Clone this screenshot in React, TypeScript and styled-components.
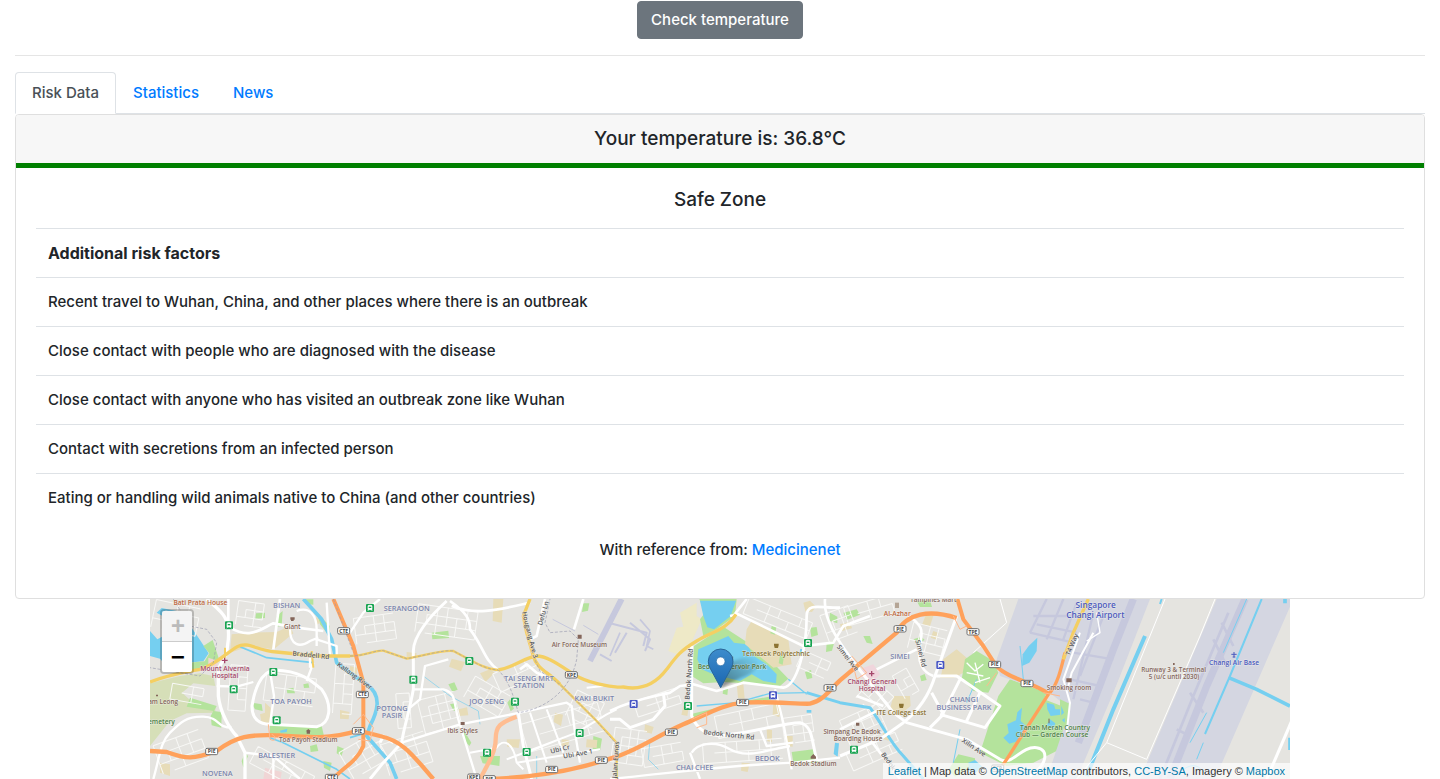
import React from 'react';
import styled, { createGlobalStyle } from 'styled-components';

const GlobalStyle = createGlobalStyle`
  *, *::before, *::after { box-sizing: border-box; }
  body {
    margin: 0;
    background: #fff;
    color: #212529;
    font-family: Inter, 'Liberation Sans', sans-serif;
    font-size: 15px;
    font-weight: 450;
    line-height: 24px;
  }
`;

const Page = styled.main`
  padding: 1px 15px 0;
`;

const Toolbar = styled.div`
  display: flex;
  justify-content: center;
`;

const PrimaryButton = styled.button`
  padding: 6px 13px;
  border: 1px solid #6c757d;
  border-radius: 4px;
  background: #6c757d;
  color: #fff;
  font: inherit;
  font-weight: 500;
  cursor: pointer;
`;

const Divider = styled.hr`
  margin: 16px 0;
  border: 0;
  border-top: 1px solid rgba(0, 0, 0, 0.1);
`;

const Tabs = styled.nav`
  display: flex;
  border-bottom: 1px solid #dee2e6;
`;

const Tab = styled.a<{ $active?: boolean }>`
  margin-bottom: -1px;
  padding: 8px 16px;
  border: 1px solid;
  border-color: ${(p) => (p.$active ? '#dee2e6 #dee2e6 #fff' : 'transparent')};
  border-radius: 4px 4px 0 0;
  background: ${(p) => (p.$active ? '#fff' : 'transparent')};
  color: ${(p) => (p.$active ? '#495057' : '#007bff')};
  font-weight: 500;
  text-decoration: none;
`;

const Card = styled.section`
  border: 1px solid #dfdfdf;
  border-radius: 4px;
  background: #fff;
`;

const CardHeader = styled.header`
  padding: 12px 20px;
  border-bottom: 5px solid green;
  border-radius: 3px 3px 0 0;
  background: #f7f7f7;
`;

const CardBody = styled.div`
  padding: 20px;
`;

const Heading = styled.h5<{ $spaced?: boolean }>`
  margin: 0 0 ${(p) => (p.$spaced ? 16 : 0)}px;
  font-size: 19px;
  font-weight: 500;
  line-height: 24px;
  text-align: center;
`;

const FactorTable = styled.table`
  width: 100%;
  margin-bottom: 16px;
  border-collapse: separate;
  border-spacing: 0;
  text-align: left;

  th, td {
    padding: 12px;
    border-top: 1px solid #dee2e6;
  }
  th { font-size: 16px; font-weight: 700; }
`;

const Source = styled.p`
  margin: 0 0 16px;
  text-align: center;
`;

const Link = styled.a`
  color: #007bff;
  font-weight: 500;
  text-decoration: none;
`;

const MapFrame = styled.section`
  position: relative;
  width: 100%;
  max-width: 1140px;
  height: 180px;
  margin: 0 auto;
  overflow: hidden;
  background: #e5e4e0;
`;

const MapArt = styled.svg`
  display: block;
  width: 100%;
  height: 100%;
`;

const ZoomControl = styled.div`
  position: absolute;
  top: 10px;
  left: 10px;
  display: flex;
  flex-direction: column;
  border: 2px solid rgba(0, 0, 0, 0.2);
  border-radius: 4px;
  background-clip: padding-box;
`;

const ZoomButton = styled.button`
  width: 30px;
  height: 30px;
  padding: 4px 0 0 2px;
  border: 0;
  background: #fff;
  color: #000;
  font: bold 24px/26px 'Liberation Mono', monospace;
  cursor: pointer;

  &:first-child {
    height: 31px;
    border-bottom: 1px solid #ccc;
    border-radius: 2px 2px 0 0;
  }
  &:last-child { border-radius: 0 0 2px 2px; }
  &:disabled { background: #f4f4f4; color: #bbb; }
`;

const Attribution = styled.div`
  position: absolute;
  right: 0;
  bottom: 0;
  padding: 0 5px;
  background: rgba(255, 255, 255, 0.7);
  color: #333;
  font: 11px/16px 'Liberation Sans', sans-serif;

  a { color: #0078a8; text-decoration: none; }
`;

type Shape = [fill: string, d: string];
type Road = [color: string, width: number, d: string];
type Label = [text: string, x: number, y: number, angle?: number];
type Grid = [x: number, y: number, cols: number, rows: number, dx: number, dy: number, angle: number];

const GREEN = '#b4e39c';
const WATER = '#75cff0';
const SCHOOL = '#e7dcb8';
const AIR = '#d4d6e1';
const RUNWAY = '#c6c8dd';
const ORANGE = '#ffa15b';
const YELLOW = '#f4cf62';

const areas: Shape[] = [
  ['#d6dfb8', 'M0 262L90 240L150 232L190 240L196 270L130 262L96 290L140 330L196 335L196 350L110 352L60 375L40 400L0 450Z'],
  [WATER, 'M0 105L22 130L45 118L38 60L20 50L35 36L80 45L128 100L150 132L176 172L160 196L112 200L92 228L60 222L30 188L0 180Z'],
  [GREEN, 'M160 150L188 132L206 186L188 208L120 225L96 222L116 200L164 196L178 172Z'],
  [GREEN, 'M120 305L200 330L192 345L110 332Z'],
  [GREEN, 'M190 345L215 348L214 395L185 388L182 360Z'],
  [SCHOOL, 'M245 115L300 110L380 108L420 90L430 112L372 160L300 150L240 170Z'],
  [GREEN, 'M360 388L515 390L522 420L360 418Z'],
  [WATER, 'M390 404L412 398L410 408L392 410Z'],
  [GREEN, 'M380 60L398 45L395 90L378 92Z M500 50L540 90L538 120L510 85Z M318 52L345 50L345 66L316 68Z M465 10L490 10L490 26L468 24Z'],
  [GREEN, 'M305 320L335 325L338 345L315 340Z M410 280L430 275L435 292L412 292Z M460 265L475 262L478 275L462 276Z'],
  [SCHOOL, 'M345 320L362 335L360 385L335 382L330 355L345 350Z M570 342L598 348L596 370L570 368Z M500 60L510 80L495 90Z M600 210L622 215L620 240L598 238Z M30 500L60 505L60 540L30 530Z'],
  ['#f0d5d5', 'M345 515L395 528L392 549L340 549Z M175 185L205 195L200 215L175 212Z'],
  [GREEN, 'M480 450L500 445L505 465L482 468Z M520 495L545 500L540 525L522 515Z M275 495L285 470L294 480L280 515Z'],
  [GREEN, 'M562 450l20 8l-8 22l-14-8Z M845 110l50-6l2 22l-50 4Z M895 265l18-6l10 22l-16 6Z M900 325l18-4l8 18l-14 6Z'],
  [SCHOOL, 'M1030 9L1060 9L1055 80L1028 75Z M905 188l40 10l-12 28l-36-14Z M990 232l30-12l14 10l-28 28Z M770 168l30 4l-4 20l-26-6Z M1070 430l40 0l-4 26l-34-4Z M925 340l26-6l4 24l-28 2Z'],
  [GREEN, 'M1300 22l18 0l-4 22l-18 4Z M1330 420l26 8l-6 36l-22-6Z M1080 310l12 28l-10 8l-10-26Z M940 400l24 40l-6 10l-18-22Z M990 480l60 0l-2 30l-50-8Z'],
  [SCHOOL, 'M1310 430l32 2l-2 24l-32-2Z M1215 350l24 6l-6 34l-22-12Z M1235 430l24 2l-6 20l-20-2Z'],
  ['#eee9c7', 'M1590 50L1640 20L1640 60L1655 70L1620 150L1580 175L1555 165L1580 95L1600 92Z'],
  [GREEN, 'M1648 9L1760 9L1755 60L1700 100L1660 120L1650 70L1665 50Z'],
  [WATER, 'M1650 14L1758 14L1742 60L1712 84L1692 100L1672 94L1660 60Z'],
  [GREEN, 'M1632 150L1720 92L1840 170L1915 248L1890 270L1780 262L1720 258L1660 262L1625 240Z'],
  [WATER, 'M1645 160L1690 140L1735 120L1752 140L1790 145L1812 180L1850 205L1880 235L1878 262L1840 255L1805 235L1770 255L1690 235L1655 220L1642 190Z'],
  [SCHOOL, 'M1805 75L1915 130L1925 205L1870 215L1785 145L1790 100Z M1600 330l16 6l-4 24l-18-4Z M1760 262l20 2l4 44l-20-2Z M1485 385l26 8l-6 20l-22-6Z'],
  [GREEN, 'M1620 355L1800 312L1870 300L1860 312L1760 320L1640 368Z M1720 275l14 4l-2 18l-14-4Z M1865 90l14 4l-4 22l-14-4Z M1890 178l12 2l-4 26l-12-4Z'],
  [GREEN, 'M1925 468L1990 460L2005 500L1930 500Z M1965 228l18-6l4 24l-16 4Z M2040 50l22 12l0 20l-24-8Z M2030 140l24-6l-8 30l-18 4Z M1980 95l20-2l4 24l-20 6Z'],
  [SCHOOL, 'M1960 20l20-6l18 18l-12 16l-20-2Z M1870 320l22 4l-4 40l-20-8Z M1850 400l16 2l0 36l-14-2Z M1910 420l18 0l0 32l-18-2Z M1775 500l24 2l-6 26l-20-4Z'],
  [WATER, 'M1950 160l12-2l2 16l-14 2Z M1970 342l14 0l0 8l-14 0Z M2055 440l12 2l-4 40l-12-8Z'],
  [SCHOOL, 'M2375 230L2380 190L2420 160L2455 190L2440 230L2410 246L2370 246Z M2230 300L2280 300L2282 330L2245 360L2220 340Z M2330 50l20 10l-10 30l-24-4Z'],
  [GREEN, 'M2445 190L2480 165L2530 195L2545 230L2515 290L2470 285L2435 250Z'],
  [GREEN, 'M2545 300L2580 250L2690 290L2682 310L2760 340L2730 460L2650 500L2570 510L2490 470Z'],
  [GREEN, 'M2080 50l40-10l10 16l-40 16Z M2140 120l20 0l8 24l-18-4Z M2290 130l24-8l10 10l-20 10Z M2300 15l40-2l6 20l-36 0Z M2425 475l50 12l0 25l-60 30l-20-20Z M2310 240l14-6l6 18l-16 4Z'],
  ['#f0d5dc', 'M2140 215L2170 205L2190 235L2165 262L2130 240Z'],
  [SCHOOL, 'M2070 85l30-8l6 20l-30 8Z M2200 410l20 8l-4 16l-20-6Z M2350 105l16 6l-6 20l-18-6Z'],
  [AIR, 'M2605 9L3010 9L2780 549L2690 549L2760 340L2700 290L2550 240L2540 190Z'],
  ['#e5e4e0', 'M3000 9L3200 9L2960 549L2790 549Z'],
  [AIR, 'M3200 9L3430 9L3195 549L2970 549Z'],
  [WATER, 'M2636 150L2662 125L2660 165L2638 200L2616 210L2618 175Z'],
  [WATER, 'M2690 320l22 6l4 14l20 0l-4 16l-30 4l-10-20Z M2572 385l26-12l4-24l14-14l-4 40l22 20l-30 40l-26 8l-18-18l16-14Z M2700 370l16 12l-6 18l-20-12Z M2455 500l20-8l22 20l-22 20l-16-6Z'],
  [GREEN, 'M2730 310L2762 325L2750 390L2730 395Z'],
  [WATER, 'M2734 330l8 20l-8 8Z M2736 372l8-6l0 14Z'],
];

const runways: Road[] = [
  [RUNWAY, 18, 'M1320 195L1415 9'],
  [RUNWAY, 3, 'M1208 70L1275 105M1300 88L1345 115'],
  [RUNWAY, 6, 'M1350 175L1385 195M1375 80L1490 110L1480 150M1395 170L1430 110M1440 80L1500 130L1485 165'],
  [RUNWAY, 5, 'M1380 180L1410 110M1470 70L1500 105L1490 150L1510 160'],
  [RUNWAY, 22, 'M2950 9L2890 160L2830 320L2785 440'],
  [RUNWAY, 22, 'M3285 9L3170 270L3060 549'],
  [RUNWAY, 8, 'M3235 50L3130 300L3030 549M3190 130L3225 200M3215 80L3250 150M3120 290L3160 350M3080 400L3120 420'],
  [RUNWAY, 7, 'M2650 60L2790 60M2660 85L2780 110M2640 110L2770 140M2690 9L2640 110M2740 9L2690 130M2780 20L2740 130M2830 50L2770 310M2860 60L2790 240M2770 170L2890 190M2760 250L2850 270M2790 310L2830 320'],
];

const waterways: Road[] = [
  [WATER, 11, 'M460 9L515 70L545 130L560 200L600 230L650 265C700 300 680 350 660 390L650 420L720 500L740 549'],
  [WATER, 5, 'M270 152L350 185L490 200M360 425L400 440L560 520L600 549M600 425L650 410'],
  [WATER, 2, 'M820 240L900 300L985 345L990 385M1160 480V549M1500 430L1495 490L1525 520'],
  [WATER, 4, 'M1640 330L1760 320L1860 292L1970 290M1915 250L1970 295'],
  [WATER, 9, 'M1970 290L2070 320L2160 335C2200 390 2220 440 2260 480L2320 549'],
  [WATER, 3, 'M2610 150L2620 250M2450 320L2480 250M2430 400L2410 500'],
  [WATER, 12, 'M2985 120L2890 340L2810 540'],
  [WATER, 6, 'M3035 9L3030 24M3335 9L3240 240L3165 414'],
  [WATER, 11, 'M3236 245L3320 280L3420 330M3405 9V22M3420 425V462'],
  [WATER, 3, 'M3290 9L3220 170M3170 350L3120 440M3160 440L3140 490M3100 520C3130 500 3150 510 3160 530'],
];

const grids: Grid[] = [
  [10, 20, 5, 4, 34, 28, 12], [260, 20, 4, 4, 26, 24, 8], [60, 270, 4, 3, 32, 24, 10],
  [20, 430, 5, 4, 36, 30, -20], [240, 210, 3, 5, 26, 34, 4], [345, 235, 6, 3, 30, 42, 8],
  [555, 205, 3, 6, 28, 30, 4], [300, 470, 7, 3, 32, 28, 28], [580, 440, 5, 4, 30, 30, -30],
  [615, 60, 5, 4, 30, 26, -8], [800, 30, 7, 4, 30, 28, 8], [810, 300, 5, 5, 28, 26, -14],
  [740, 290, 3, 5, 20, 26, -4], [950, 260, 5, 4, 30, 24, 30], [700, 430, 5, 4, 34, 32, -18],
  [1040, 210, 5, 3, 34, 30, -24], [1260, 300, 4, 4, 30, 28, 26], [1120, 370, 6, 3, 48, 44, -16],
  [1390, 400, 5, 5, 24, 26, 8], [1460, 300, 5, 3, 34, 24, -18], [1700, 350, 6, 3, 38, 34, -12],
  [1660, 440, 8, 3, 34, 30, -4], [1480, 450, 5, 3, 30, 28, -10], [1900, 360, 4, 4, 30, 26, -8],
  [1780, 20, 7, 3, 34, 26, 22], [2020, 40, 4, 4, 30, 28, -20], [2090, 20, 5, 3, 36, 28, -16],
  [2280, 90, 5, 4, 26, 26, 14], [2130, 270, 4, 4, 28, 26, 42], [2080, 350, 5, 4, 30, 28, -24],
  [2240, 210, 3, 4, 24, 26, -30], [2100, 450, 6, 3, 32, 28, -24], [1940, 180, 4, 3, 30, 26, 24],
];

const streets: Road[] = [
  ['#fff', 10, 'M170 9C215 50 240 60 235 130L230 170L205 220V300C210 350 240 400 260 420L285 470V549'],
  ['#fff', 8, 'M240 95C300 130 330 100 370 82L440 95L520 105M390 9L370 160M235 9L235 130'],
  ['#fff', 7, 'M440 45C480 30 500 60 500 100V150M420 100C420 150 450 155 480 135L505 125M530 20L540 180M500 130L560 150V180'],
  ['#fff', 9, 'M375 222C330 225 312 290 306 330C305 370 330 385 360 385L500 392C540 385 550 330 515 280C480 250 450 225 375 222Z'],
  ['#fff', 7, 'M360 225L372 300L360 385M200 270L260 272L310 258M470 255L490 200M480 175V215M600 110L640 50L690 9'],
  ['#fff', 7, 'M10 549C30 480 30 440 60 410S110 360 160 362S200 395 245 395M285 470L370 480L450 549M370 475V549'],
  ['#fff', 9, 'M890 15C840 60 790 120 790 165V280C780 340 760 400 755 440L700 500L660 549'],
  ['#fff', 8, 'M900 15C950 50 960 70 960 100C1000 150 1000 190 1045 222M905 30C980 60 1050 40 1140 20'],
  ['#fff', 7, 'M790 280L880 280C920 290 910 320 925 370L980 549M895 190L825 210L810 310L780 335M755 440L930 385L1110 350L1250 320L1265 330L1275 410L1290 500'],
  ['#fff', 9, 'M1105 350L1120 450L1145 549M730 440L700 420L690 440'],
  ['#fff', 6, 'M1070 490L1280 410L1370 355L1400 340M1130 470L1240 425M960 470L1040 455C1060 425 1090 440 1100 500L1120 520M1140 350L1190 500M1190 340L1240 470M1100 500L1350 460M1310 275L1360 270'],
  ['#fff', 8, 'M1300 9L1272 100M1185 9L1160 120L1140 130M1110 220L1130 205L1160 230L1210 250'],
  ['#fff', 8, 'M1380 345C1450 310 1520 300 1560 290L1590 270L1630 265L1700 285L1780 260L1900 275C1940 270 1970 160 1970 60C1970 20 2010 35 2050 35H2070'],
  ['#fff', 9, 'M1625 150V360C1640 400 1680 430 1740 415C1830 405 1900 380 1950 380C1990 390 1985 440 2000 490M1380 370H1410L1440 395L1510 370L1545 330L1540 290'],
  ['#fff', 8, 'M1740 60L1765 55L1960 150L2050 140L2080 90L2160 60M1790 9L1750 60M2025 9C2020 70 2060 130 2120 210'],
  ['#fff', 7, 'M1875 280L1900 380L1925 520M1830 400L1850 450L1930 440M1625 470C1640 445 1690 430 1740 460S1860 460 1920 450M1620 470L1650 549M1380 549C1580 530 1700 510 1930 500L2070 485'],
  ['#fff', 9, 'M2120 210L2230 350L2270 380L2450 430L2550 490C2590 510 2610 450 2660 455C2700 460 2690 510 2640 540'],
  ['#fff', 9, 'M2420 60L2355 240C2340 290 2310 340 2260 380L2190 430L2070 480M2355 240H2420L2550 330L2505 395L2370 355M2345 290L2380 355L2340 395M2430 250L2380 350M2490 290L2450 375'],
  ['#fff', 8, 'M2265 50C2320 90 2320 100 2310 150S2320 230 2350 240M2180 220L2300 160M2120 300L2200 330M2070 400L2190 340M2160 430L2250 549'],
  ['#fff', 4, 'M2450 200L2475 225L2500 205M2450 230L2500 240M2475 260L2520 245M2475 200L2490 260M2840 50L2850 110L2810 135'],
  ['#fff', 3, 'M2550 9L2570 80L2470 170M3045 9L2870 440L2990 490L3150 120L3195 9M2870 440L2780 549'],
  ['#fff', 6, 'M2830 110L2765 230L2755 270M2790 110L2740 250L2760 320L2750 410'],
  ['#fff', 9, 'M3425 375L3350 549'],
];

const highways: Road[] = [
  [YELLOW, 10, 'M0 258C60 235 110 228 150 220S230 170 262 152S320 165 380 168L500 180H600'],
  [YELLOW, 7, 'M600 180C650 180 680 160 700 164L770 188C820 180 880 160 910 165C960 190 1000 220 1045 222'],
  [YELLOW, 10, 'M1045 222C1090 215 1120 185 1160 180C1200 180 1250 225 1290 245S1400 275 1420 273C1480 285 1520 260 1550 220C1580 180 1590 165 1640 135S1730 100 1758 55'],
  [YELLOW, 10, 'M1140 9L1120 60L1130 110L1150 180C1160 220 1200 230 1230 265'],
  [YELLOW, 7, 'M1230 265L1340 375L1400 440V549'],
  [YELLOW, 6, 'M485 165L490 215M225 185V155'],
  ['#ffbd91', 13, 'M1100 362C1050 380 1037 390 1037 430S1010 510 990 549'],
  [ORANGE, 12, 'M550 9L610 150L640 260V450C620 500 570 520 550 549'],
  [ORANGE, 13, 'M0 465L50 468C110 490 130 490 200 465C260 420 300 415 380 418C480 425 540 430 625 404L690 420C760 435 790 480 850 549'],
  [ORANGE, 13, 'M1010 549C1180 545 1300 515 1390 485C1460 465 1520 420 1600 385S1720 325 1780 320C1850 315 1950 325 1980 323C2020 315 2040 280 2070 253L2240 110C2270 50 2340 40 2420 66'],
  [ORANGE, 12, 'M2422 9L2440 70L2500 150L2540 212C2580 250 2640 255 2700 295'],
  [ORANGE, 10, 'M2695 295L2570 490L2550 520'],
  [ORANGE, 10, 'M2700 290C2725 260 2735 210 2745 170'],
  [YELLOW, 10, 'M2740 190L2770 110L2815 9'],
  ['#ffb98c', 3, 'M610 385L640 355L670 395L660 435L625 430M355 385L360 430C380 440 380 420 365 415M1625 370L1670 350V385L1640 395M2105 180L2150 230L2120 250L2105 190M2540 230L2510 270M2410 60L2430 100L2450 90M2680 290L2730 300'],
];

const tracks: Road[] = [
  ['#9a9bb0', 2, 'M550 9L608 165M600 180C650 180 680 160 700 164L770 188C820 180 880 160 910 165C960 190 1000 220 1045 222C1080 260 1090 300 1105 350C1180 340 1260 290 1280 190L1285 130L1260 105L1200 110L1185 80L1200 9'],
  ['#9a9bb0', 2, 'M1150 180L1170 225L1230 265L1340 375L1395 440V520M70 9L120 90L170 100L200 140L190 200L150 240L0 215'],
];

const districts: Label[] = [
  ['BISHAN', 410, 36], ['TOA PAYOH', 423, 325], ['BALESTIER', 380, 485], ['NOVENA', 202, 539],
  ['SERANGOON', 770, 45], ['POTONG', 726, 345], ['PASIR', 726, 367], ['JOO SENG', 1010, 323],
  ['TAI SENG MRT', 1137, 254], ['STATION', 1137, 277], ['KAKI BUKIT', 1333, 314],
  ['CHAI CHEE', 1634, 521], ['BEDOK', 1852, 495], ['SIMEI', 2250, 188],
  ['CHANGI', 2442, 319], ['BUSINESS PARK', 2442, 342],
];

const roadNames: Label[] = [
  ['Braddell Rd', 482, 184, 6], ['Kallang River', 610, 245, 36], ['Hougang Ave 3', 1133, 118, 76],
  ['Defu Ln 10', 1190, 40, -74], ['Ubi Cr', 1232, 466, -14], ['Ubi Ave 1', 1285, 480, -10],
  ['Jalan Eunos', 1404, 492, -86], ['Bedok North Rd', 1624, 235, -86], ['Bedok North Rd', 1736, 423, 6],
  ['Simei Ave', 2088, 190, 52], ['Simei Rd', 2306, 174, 76], ['Xilin Ave', 2468, 460, 34],
  ['T4 Way', 2772, 148, -68], ['Bedok', 2210, 500, 54],
];

const places: Label[] = [
  ['Giant', 427, 98], ['Sam Leong', 34, 324], ['Toa Payoh Stadium', 475, 437], ['Ibis Styles', 938, 412],
  ['Air Force Museum', 1288, 153], ['Bedok Stadium', 1990, 510], ['Simpang De Bedok', 2106, 415],
  ['Boarding House', 2124, 436], ['Smoking room', 2757, 282], ['Runway 3 & Terminal', 3071, 228],
  ['5 (u/c until 2030)', 3072, 249], ['Tampines Mart', 2350, 18],
];

const shields: Label[] = [
  ['CTE', 581, 105], ['CTE', 637, 296], ['PIE', 625, 405], ['PIE', 185, 467], ['CTE', 544, 545],
  ['KPE', 1264, 237], ['KPE', 971, 544], ['PIE', 1018, 549], ['PIE', 1205, 521], ['PIE', 1354, 493],
  ['PIE', 1564, 409], ['PIE', 1778, 320], ['PIE', 2040, 276], ['PIE', 2250, 99], ['TPE', 2469, 108],
  ['PIE', 2534, 206], ['PIE', 2631, 263], ['ECP', 2543, 517],
];

const stations: [number, number, string][] = [
  [237, 88, '#17a350'], [660, 36, '#17a350'], [370, 228, '#17a350'], [251, 280, '#17a350'], [380, 373, '#17a350'],
  [958, 195, '#17a350'], [790, 251, '#17a350'], [1095, 317, '#17a350'], [1011, 470, '#17a350'], [1130, 468, '#17a350'],
  [1289, 411, '#17a350'], [1614, 330, '#17a350'], [1974, 141, '#17a350'], [2112, 461, '#17a350'],
  [1451, 324, '#4453c4'], [1869, 298, '#4453c4'], [2371, 207, '#4453c4'],
];

const BRIGHT: { color: string; size: number; items: Label[] }[] = [
  { color: '#bd6740', size: 20, items: [['Bati Prata House', 151, 26], ['Al-Azhar', 2242, 59]] },
  { color: '#a5476b', size: 20, items: [['Mount Alvernia', 225, 225], ['Hospital', 225, 246], ['Changi General', 2166, 263], ['Hospital', 2166, 284]] },
  { color: '#4d8046', size: 20, items: [['Cemetery', 28, 385], ['Bedok Reservoir Park', 1746, 220], ['Tanah Merah Country', 2715, 403], ['Club — Garden Course', 2706, 424]] },
  { color: '#8c7332', size: 20, items: [['Temasek Polytechnic', 1878, 180], ['ITE College East', 2254, 357]] },
  { color: '#4b59bd', size: 20, items: [['Changi Air Base', 3252, 206]] },
  { color: '#4b59bd', size: 25, items: [['Singapore', 2837, 37], ['Changi Airport', 2836, 66]] },
];

const Roads = ({ items }: { items: Road[] }) => (
  <g fill="none" strokeLinejoin="round">
    {items.map(([color, width, d]) => (
      <path key={d} d={d} stroke={color} strokeWidth={width} />
    ))}
  </g>
);

const Labels = ({ items, color, size, halo = '#f3f2ef' }: { items: Label[]; color: string; size: number; halo?: string }) => (
  <g fill={color} fontSize={size} stroke={halo} strokeOpacity={0.6} strokeWidth={3} paintOrder="stroke" textAnchor="middle">
    {items.map(([text, x, y, angle = 0]) => (
      <text key={`${text}-${x}-${y}`} x={x} y={y} transform={`rotate(${angle} ${x} ${y})`}>{text}</text>
    ))}
  </g>
);

const gridPath = ([x, y, cols, rows, dx, dy]: Grid) => {
  const across = Array.from({ length: rows }, (_, r) => `M${x + (r % 2) * dx} ${y + r * dy}H${x + (cols - 1) * dx}`);
  const down = Array.from({ length: cols }, (_, c) => `M${x + c * dx} ${y + (c % 3 === 1 ? dy : 0)}V${y + (rows - 1 - (c % 2)) * dy}`);
  return [...across, ...down].join('');
};

const CityMap = () => (
  <MapArt viewBox="0 9 3420 540" preserveAspectRatio="xMidYMid slice" fontFamily="'Open Sans', sans-serif" fontWeight={600} role="img" aria-label="Street map around Bedok Reservoir Park">
    <defs>
      <linearGradient id="pin" x1="0" y1="0" x2="0" y2="1">
        <stop offset="0" stopColor="#3d8ccc" />
        <stop offset="1" stopColor="#1b66b1" />
      </linearGradient>
      <linearGradient id="shade" x1="0" y1="1" x2="1" y2="0">
        <stop offset="0" stopColor="#000" stopOpacity="0.45" />
        <stop offset="1" stopColor="#000" stopOpacity="0" />
      </linearGradient>
      <filter id="soft"><feGaussianBlur stdDeviation="5" /></filter>
    </defs>
    {areas.map(([fill, d]) => <path key={d} d={d} fill={fill} />)}
    <Roads items={runways} />
    <g fill="none" stroke="#f8f8f6" strokeWidth={3}>
      {grids.map((g) => <path key={g.join()} d={gridPath(g)} transform={`rotate(${g[6]} ${g[0] + 50} ${g[1] + 40})`} />)}
    </g>
    <Roads items={waterways} />
    <Roads items={streets} />
    <Roads items={highways} />
    <g strokeDasharray="9 5"><Roads items={tracks} /></g>
    {stations.map(([x, y, color]) => (
      <g key={`${x}-${y}`} transform={`translate(${x} ${y})`}>
        <rect x={-12} y={-12} width={24} height={24} rx={3} fill={color} />
        <path d="M-6 5V-5Q-6 -8 -3 -8H3Q6 -8 6 -5V5ZM-4 5L-7 9M4 5L7 9" fill="#fff" stroke="#fff" strokeWidth={2} />
        <path d="M-4 -4H4V0H-4Z" fill={color} />
      </g>
    ))}
    <Labels items={districts} color="#7a84ad" size={22} />
    <Labels items={roadNames} color="#5c5c60" size={20} />
    <Labels items={places} color="#84665a" size={19} />
    {BRIGHT.map((b) => <Labels key={b.color + b.size} {...b} />)}
    {shields.map(([text, x, y]) => (
      <g key={`${x}-${y}`}>
        <rect x={x - 18} y={y - 10} width={36} height={19} rx={4} fill="#fff" stroke="#6e6e6e" strokeWidth={3} />
        <text x={x} y={y + 5} fill="#444" fontSize={15} fontWeight={700} textAnchor="middle">{text}</text>
      </g>
    ))}
    <g fill="#84665a">
      <path d="M421 64h13v7h-3v4h-8v-4h-2ZM932 378h12v9h-12ZM1283 116h12v12h-12ZM2118 380h10v9h-10ZM3069 201h5v6h-5ZM18 296h6v5h-6Z" />
      <path d="M475 399l8 7h-3v7h-10v-7h-3ZM1990 474l8 8v6h-16v-6ZM2749 247h16v12h-16Z" />
    </g>
    <path d="M1872 143h14v5l-2 8h-10l-2-8ZM2247 323h14v5l-2 8h-10l-2-8Z" fill="#8c7332" />
    <path d="M2238 20v16M2244 20v16M1748 182v10M2697 368v14" stroke="#84664a" strokeWidth={3} />
    <path d="M224 185v17M215 193h18M2165 225v16M2157 233h16" stroke="#a5476b" strokeWidth={4} />
    <path d="M3252 168v16M3244 175h16M3248 183h8" stroke="#4b59bd" strokeWidth={3} />
    <path d="M1712 276L1734 205Q1790 170 1822 195Q1830 225 1772 246Z" fill="url(#shade)" filter="url(#soft)" />
    <path d="M1712 275L1679 214Q1675 204 1675 196A37 37 0 0 1 1749 196Q1749 204 1745 214Z" fill="url(#pin)" stroke="#2a6596" strokeWidth={3} />
    <circle cx={1712} cy={196} r={13} fill="#fff" stroke="#2a6ba5" strokeWidth={2} />
  </MapArt>
);

const factors = [
  'Recent travel to Wuhan, China, and other places where there is an outbreak',
  'Close contact with people who are diagnosed with the disease',
  'Close contact with anyone who has visited an outbreak zone like Wuhan',
  'Contact with secretions from an infected person',
  'Eating or handling wild animals native to China (and other countries)',
];

export default function App() {
  return (
    <>
      <GlobalStyle />
      <Page>
        <Toolbar>
          <PrimaryButton type="button">Check temperature</PrimaryButton>
        </Toolbar>
        <Divider />
        <Tabs>
          <Tab href="#risk" $active aria-current="page">Risk Data</Tab>
          <Tab href="#statistics">Statistics</Tab>
          <Tab href="#news">News</Tab>
        </Tabs>
        <Card id="risk">
          <CardHeader>
            <Heading>Your temperature is: 36.8°C</Heading>
          </CardHeader>
          <CardBody>
            <Heading $spaced>Safe Zone</Heading>
            <FactorTable>
              <thead>
                <tr><th scope="col">Additional risk factors</th></tr>
              </thead>
              <tbody>
                {factors.map((factor) => <tr key={factor}><td>{factor}</td></tr>)}
              </tbody>
            </FactorTable>
            <Source>With reference from: <Link href="#medicinenet">Medicinenet</Link></Source>
          </CardBody>
        </Card>
        <MapFrame>
          <CityMap />
          <ZoomControl>
            <ZoomButton type="button" aria-label="Zoom in" disabled>+</ZoomButton>
            <ZoomButton type="button" aria-label="Zoom out">−</ZoomButton>
          </ZoomControl>
          <Attribution>
            <a href="#leaflet">Leaflet</a> | Map data © <a href="#osm">OpenStreetMap</a> contributors, <a href="#license">CC-BY-SA</a>, Imagery © <a href="#mapbox">Mapbox</a>
          </Attribution>
        </MapFrame>
      </Page>
    </>
  );
}
